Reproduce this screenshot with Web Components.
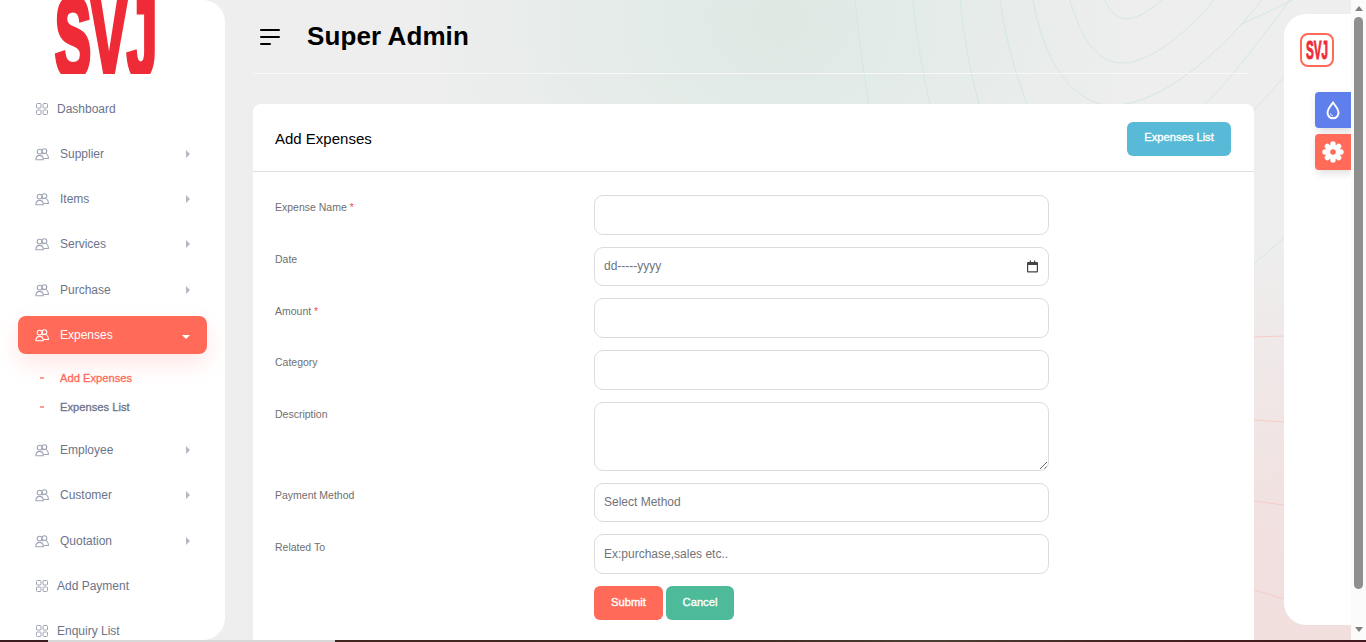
<!DOCTYPE html>
<html>
<head>
<meta charset="utf-8">
<title>Add Expenses</title>
<style>
  html, body { margin: 0; height: 100%; overflow: hidden; }
  body { font-family: "Liberation Sans", Arial, sans-serif; }
</style>
</head>
<body>
<admin-app>
  <side-bar slot="side">
    <nav-item icon="grid">Dashboard</nav-item>
    <nav-item icon="people" arrow>Supplier</nav-item>
    <nav-item icon="people" arrow>Items</nav-item>
    <nav-item icon="people" arrow>Services</nav-item>
    <nav-item icon="people" arrow>Purchase</nav-item>
    <nav-item icon="people" arrow active>Expenses</nav-item>
    <sub-nav>
      <sub-item active>Add Expenses</sub-item>
      <sub-item>Expenses List</sub-item>
    </sub-nav>
    <nav-item icon="people" arrow>Employee</nav-item>
    <nav-item icon="people" arrow>Customer</nav-item>
    <nav-item icon="people" arrow>Quotation</nav-item>
    <nav-item icon="grid">Add Payment</nav-item>
    <nav-item icon="grid">Enquiry List</nav-item>
  </side-bar>
  <top-header slot="main">Super Admin</top-header>
  <form-card slot="main" heading="Add Expenses" action="Expenses List">
    <form-row label="Expense Name" required><text-box></text-box></form-row>
    <form-row label="Date"><text-box hint="dd-----yyyy" calendar></text-box></form-row>
    <form-row label="Amount" required><text-box></text-box></form-row>
    <form-row label="Category"><text-box></text-box></form-row>
    <form-row label="Description"><text-box multiline></text-box></form-row>
    <form-row label="Payment Method"><text-box hint="Select Method"></text-box></form-row>
    <form-row label="Related To"><text-box hint="Ex:purchase,sales etc.."></text-box></form-row>
    <form-row>
      <action-btn color="#ff6a59" width="69">Submit</action-btn>
      <action-btn color="#4dbb9a" width="68">Cancel</action-btn>
    </form-row>
  </form-card>
  <right-dock slot="dock"></right-dock>
  <fake-scrollbar slot="bar"></fake-scrollbar>
</admin-app>

<script>
const ICONS = {
  grid: `<svg width="14" height="14" viewBox="0 0 14 14" fill="none" stroke="currentColor" stroke-width="1">
      <rect x="1.5" y="1.5" width="4.5" height="4.5" rx="1"/><rect x="8" y="1.5" width="4.5" height="4.5" rx="1"/>
      <rect x="1.5" y="8" width="4.5" height="4.5" rx="1"/><rect x="8" y="8" width="4.5" height="4.5" rx="1"/></svg>`,
  people: `<svg width="14" height="14" viewBox="0 0 14 14" fill="none" stroke="currentColor" stroke-width="1.1">
      <circle cx="4.6" cy="4.6" r="2.4"/><circle cx="9.4" cy="4.1" r="2.4"/>
      <path d="M.9 12.700c0-2.600 1.500-4.300 3.700-4.300s3.700 1.700 3.700 4.300z"/><path d="M7 7c.8-.5 1.600-.7 2.500-.7 2.300 0 3.900 2.400 3.900 5.200H8.600"/></svg>`
};

class AdminApp extends HTMLElement {
  constructor() {
    super();
    this.attachShadow({ mode: 'open' });
  }
  connectedCallback() {
    this.shadowRoot.innerHTML = `
      <style>
        :host { display: flex; flex-direction: column; height: 642px; width: 1366px; overflow: hidden; }
        .row { position: relative; display: flex; height: 640px; flex: none; overflow: hidden;
          background:
            radial-gradient(ellipse 370px 300px at 780px 20px, #dfe9e4 0%, #e2ebe7 30%, rgba(238,238,238,0) 100%),
            radial-gradient(ellipse 700px 460px at 1300px 700px, #f2dedd 0%, #f1e1e0 40%, rgba(238,238,238,0) 100%),
            #eeeeee; }
        .lines { position: absolute; left: 0; top: 0; }
        .main { position: relative; flex: 1; min-width: 0; padding: 0 30px 0 28px; display: flex; flex-direction: column; }
        .strip { height: 2px; flex: none; display: flex; }
        .strip i:nth-child(1) { width: 48px; background: #3a1d1c; }
        .strip i:nth-child(2) { width: 287px; background: #d8d8d8; }
        .strip i:nth-child(3) { flex: 1; background: linear-gradient(90deg, #40261f 0%, #3f2b22 40%, #494033 58%, #43201f 78%, #451a1f 100%); }
      </style>
      <div class="row">
        <svg class="lines" width="1366" height="640" fill="none" stroke-width="1">
          <g stroke="#d3e8e0">
            <path d="M855 0C859 40 864 75 869 104"/>
            <path d="M913 0C917 40 922 70 930 104"/>
            <path d="M960 0C964 40 970 70 979 104"/>
            <path d="M1000 0C1005 35 1014 70 1027 104"/>
            <path d="M1033 0C1040 40 1060 100 1110 106C1170 104 1230 40 1262 0"/>
            <path d="M1070 0C1080 35 1095 63 1123 63C1150 63 1190 30 1214 0"/>
            <path d="M1105 0C1110 12 1117 19 1126 19C1137 19 1150 10 1162 0"/>
            <path d="M1205 104C1230 80 1260 40 1290 0"/>
            <path d="M1254 110C1264 100 1274 88 1284 77"/>
            <path d="M1240 25L1293 0"/>
            <path d="M1254 264L1284 238"/>
          </g>
          <g stroke="#f7cbc5">
            <path d="M1254 337L1284 336"/>
            <path d="M1254 420L1284 422"/>
            <path d="M1254 501L1284 505"/>
            <path d="M1254 590L1284 599"/>
          </g>
        </svg>
        <slot name="side"></slot>
        <div class="main"><slot name="main"></slot></div>
        <slot name="dock"></slot>
        <slot name="bar"></slot>
      </div>
      <div class="strip"><i></i><i></i><i></i></div>
    `;
  }
}

class SideBar extends HTMLElement {
  constructor() {
    super();
    this.attachShadow({ mode: 'open' });
  }
  connectedCallback() {
    this.shadowRoot.innerHTML = `
      <style>
        :host { position: relative; display: block; width: 225px; height: 640px; flex: none; background: #fff;
          border-radius: 0 22px 22px 0; overflow: hidden; }
        .logo { height: 74px; overflow: hidden; margin-bottom: 15.5px; }
        .logo svg { display: block; margin-left: 50px; }
        .logo text { font-family: "Liberation Sans", Arial, sans-serif; font-weight: 700; fill: #ee2b36; stroke: #ee2b36; stroke-width: 6px; }
        nav { padding: 0 18px; }
      </style>
      <div class="logo">
        <svg width="110" height="74" viewBox="0 0 110 74">
          <text x="5" y="76" font-size="112" textLength="102" lengthAdjust="spacingAndGlyphs">SVJ</text>
        </svg>
      </div>
      <nav><slot></slot></nav>
    `;
  }
}

class NavItem extends HTMLElement {
  constructor() {
    super();
    this.attachShadow({ mode: 'open' });
  }
  connectedCallback() {
    const icon = this.getAttribute('icon');
    const caret = this.hasAttribute('active')
      ? '<span class="caret down"></span>'
      : this.hasAttribute('arrow') ? '<span class="caret"></span>' : '';
    this.shadowRoot.innerHTML = `
      <style>
        :host { display: flex; align-items: center; height: 38px; margin: 0 0 7.25px; padding: 0 17px 0 17px;
          box-sizing: border-box; font-size: 12px; color: #6c748a; border-radius: 8px; }
        :host([active]) { background: #ff6a59; color: #fff; box-shadow: 0 10px 22px rgba(255,106,89,.16); }
        .icon { color: #9ea4b3; display: flex; width: 22px; flex: none; margin-right: ${icon === 'people' ? '3px' : '0'}; }
        :host([active]) .icon { color: #fff; }
        .label { flex: 1; }
        .caret { width: 0; height: 0; border-left: 4px solid #b4b8c2; border-top: 4px solid transparent; border-bottom: 4px solid transparent; }
        .caret.down { border-left: 4px solid transparent; border-right: 4px solid transparent; border-top: 4px solid #fff; border-bottom: 0; margin-top: 4px; }
      </style>
      <span class="icon">${ICONS[icon]}</span>
      <span class="label"><slot></slot></span>
      ${caret}
    `;
  }
}

class SubNav extends HTMLElement {
  constructor() {
    super();
    this.attachShadow({ mode: 'open' });
  }
  connectedCallback() {
    this.shadowRoot.innerHTML = `
      <style>:host { display: block; height: 70px; padding-top: 2.500px; box-sizing: border-box; }</style>
      <slot></slot>
    `;
  }
}

class SubItem extends HTMLElement {
  constructor() {
    super();
    this.attachShadow({ mode: 'open' });
  }
  connectedCallback() {
    this.shadowRoot.innerHTML = `
      <style>
        :host { display: flex; align-items: center; height: 29px; padding-left: 22px; font-size: 11.2px; color: #6c748a; -webkit-text-stroke: .3px currentColor; }
        :host([active]) { color: #ff6a59; }
        i { width: 4px; height: 1.5px; background: #ff9a8e; margin-right: 16px; }
      </style>
      <i></i><slot></slot>
    `;
  }
}

class TopHeader extends HTMLElement {
  constructor() {
    super();
    this.attachShadow({ mode: 'open' });
  }
  connectedCallback() {
    this.shadowRoot.innerHTML = `
      <style>
        :host { display: flex; align-items: center; height: 73px; flex: none; margin-right: 5px; border-bottom: 1px solid #f8f8f8; margin-bottom: 30px; }
        .burger { display: flex; flex-direction: column; gap: 5px; width: 20px; margin-left: 7px; margin-right: 27px; }
        .burger i { display: block; height: 2px; background: #000; border-radius: 1px; }
        .burger i:last-child { width: 11px; }
        h1 { margin: 0; font-size: 26px; font-weight: 700; color: #000; letter-spacing: .1px; }
      </style>
      <div class="burger"><i></i><i></i><i></i></div>
      <h1><slot></slot></h1>
    `;
  }
}

class FormCard extends HTMLElement {
  constructor() {
    super();
    this.attachShadow({ mode: 'open' });
  }
  connectedCallback() {
    this.shadowRoot.innerHTML = `
      <style>
        :host { display: block; flex: 1; background: #fff; border-radius: 8px 8px 0 0; min-height: 0; }
        header { display: flex; align-items: center; justify-content: space-between; height: 65px; padding: 2px 23px 0 22px; border-bottom: 1px solid #dedede; }
        h2 { margin: 0; font-size: 15px; font-weight: 400; color: #000; }
        button { font: 400 11.2px "Liberation Sans", Arial, sans-serif; -webkit-text-stroke: .35px #fff; color: #fff; background: #58bad7; border: 0; border-radius: 6px; width: 104px; height: 34px; padding: 0 0 3px; }
        .body { padding: 23px 22px 0; }
      </style>
      <header>
        <h2>${this.getAttribute('heading')}</h2>
        <button type="button">${this.getAttribute('action')}</button>
      </header>
      <div class="body"><slot></slot></div>
    `;
  }
}

class FormRow extends HTMLElement {
  constructor() {
    super();
    this.attachShadow({ mode: 'open' });
  }
  connectedCallback() {
    const label = this.getAttribute('label') || '';
    const star = this.hasAttribute('required') ? ' <b>*</b>' : '';
    this.shadowRoot.innerHTML = `
      <style>
        :host { display: grid; grid-template-columns: 319px 455px; margin-bottom: 12px; }
        label { font-size: 10.5px; color: #6f6f6f; padding-top: 6.3px; line-height: 12px; }
        b { color: #f0525a; font-weight: 400; }
        .ctl { display: flex; gap: 3px; }
      </style>
      <label>${label}${star}</label>
      <div class="ctl"><slot></slot></div>
    `;
  }
}

class TextBox extends HTMLElement {
  constructor() {
    super();
    this.attachShadow({ mode: 'open' });
  }
  connectedCallback() {
    const hint = this.getAttribute('hint');
    const cal = this.hasAttribute('calendar') ? `
      <svg width="11" height="13" viewBox="0 0 11 13"><path fill="#444" d="M1 2h1.800V.6H4V2h3V.6h1.200V2H10a1 1 0 0 1 1 1v8.500a1 1 0 0 1-1 1H1a1 1 0 0 1-1-1V3a1 1 0 0 1 1-1zm.2 3v6.300h8.600V5z"/></svg>` : '';
    const inner = this.hasAttribute('multiline')
      ? '<textarea></textarea>'
      : hint ? `<span>${hint}</span>${cal}` : '<input type="text">';
    this.shadowRoot.innerHTML = `
      <style>
        :host { display: flex; align-items: center; justify-content: space-between; width: 455px; height: 39.7px; box-sizing: border-box;
          border: 1px solid #dcdcdc; border-radius: 9px; padding: 0 10px 1px 9px; font-size: 12px; color: #6f7479; background: #fff; overflow: hidden; }
        :host([multiline]) { height: 69px; padding: 0; }
        input { border: 0; outline: 0; width: 100%; background: none; }
        textarea { display: block; border: 0; outline: 0; width: 100%; height: 100%; box-sizing: border-box; background: none; }
      </style>
      ${inner}
    `;
  }
}

class ActionBtn extends HTMLElement {
  constructor() {
    super();
    this.attachShadow({ mode: 'open' });
  }
  connectedCallback() {
    this.shadowRoot.innerHTML = `
      <style>
        :host { display: flex; align-items: center; justify-content: center; height: 34px; box-sizing: border-box; padding-bottom: 2px;
          width: ${this.getAttribute('width')}px; background: ${this.getAttribute('color')}; color: #fff; font-size: 11.2px; -webkit-text-stroke: .35px #fff; border-radius: 6px; }
      </style>
      <slot></slot>
    `;
  }
}

class RightDock extends HTMLElement {
  constructor() {
    super();
    this.attachShadow({ mode: 'open' });
  }
  connectedCallback() {
    this.shadowRoot.innerHTML = `
      <style>
        :host { display: block; width: 67px; height: 611px; margin-top: 14px; flex: none; background: #fff; border-radius: 22px 0 0 22px; }
        .logo { width: 34px; height: 34px; box-sizing: border-box; margin: 19px 0 25px 16px; border: 2px solid #ff6a59; border-radius: 8px; }
        .logo svg { display: block; overflow: visible; }
        .logo text { font-family: "Liberation Sans", Arial, sans-serif; font-weight: 700; fill: #ee2b36; stroke: #ee2b36; stroke-width: 1px; }
        .tool { display: flex; align-items: center; justify-content: center; width: 36px; height: 36px; margin: 0 0 6px 31px; border-radius: 4px 0 0 4px; box-shadow: 2px 3px 8px rgba(0,0,0,.14); }
        .blue { background: #5f7fec; }
        .red { background: #ff6a59; }
      </style>
      <div class="logo">
        <svg width="30" height="30" viewBox="0 0 30 30"><text x="4" y="24" font-size="26" textLength="22" lengthAdjust="spacingAndGlyphs">SVJ</text></svg>
      </div>
      <div class="tool blue">
        <svg width="14" height="19" viewBox="0 0 14 19" fill="none" stroke="#fff" stroke-width="2" stroke-linejoin="round">
          <path d="M7 1.400C5.600 4 1.500 7.600 1.500 11.800a5.500 5.500 0 0 0 11 0C12.500 7.600 8.400 4 7 1.400z"/><path stroke-width="1" d="M4.500 12.500c.3 1.300 1.200 2.200 2.500 2.400"/>
        </svg>
      </div>
      <div class="tool red">
        <svg width="22" height="22" viewBox="0 0 22 22">
          <g stroke="#fff" stroke-width="5.400" stroke-linecap="round">
            <path d="M11 3V19M3 11H19M5.300 5.300L16.700 16.700M16.700 5.300L5.300 16.700"/>
          </g>
          <circle cx="11" cy="11" r="7" fill="#fff"/><circle cx="11" cy="11" r="2.800" fill="#ff6a59"/>
        </svg>
      </div>
    `;
  }
}

class FakeScrollbar extends HTMLElement {
  constructor() {
    super();
    this.attachShadow({ mode: 'open' });
  }
  connectedCallback() {
    this.shadowRoot.innerHTML = `
      <style>
        :host { display: flex; flex-direction: column; align-items: center; width: 15px; height: 640px; flex: none; background: #fbfbfb; }
        .up, .down { width: 0; height: 0; border-left: 4.500px solid transparent; border-right: 4.500px solid transparent; flex: none; }
        .up { border-bottom: 5px solid #808080; margin-top: 6px; }
        .down { border-top: 5px solid #808080; margin-top: 38px; }
        .thumb { width: 9px; height: 572px; margin-top: 6px; background: #8f8f8f; border-radius: 5px; flex: none; }
      </style>
      <div class="up"></div><div class="thumb"></div><div class="down"></div>
    `;
  }
}

customElements.define('admin-app', AdminApp);
customElements.define('side-bar', SideBar);
customElements.define('nav-item', NavItem);
customElements.define('sub-nav', SubNav);
customElements.define('sub-item', SubItem);
customElements.define('top-header', TopHeader);
customElements.define('form-card', FormCard);
customElements.define('form-row', FormRow);
customElements.define('text-box', TextBox);
customElements.define('action-btn', ActionBtn);
customElements.define('right-dock', RightDock);
customElements.define('fake-scrollbar', FakeScrollbar);
</script>
</body>
</html>
